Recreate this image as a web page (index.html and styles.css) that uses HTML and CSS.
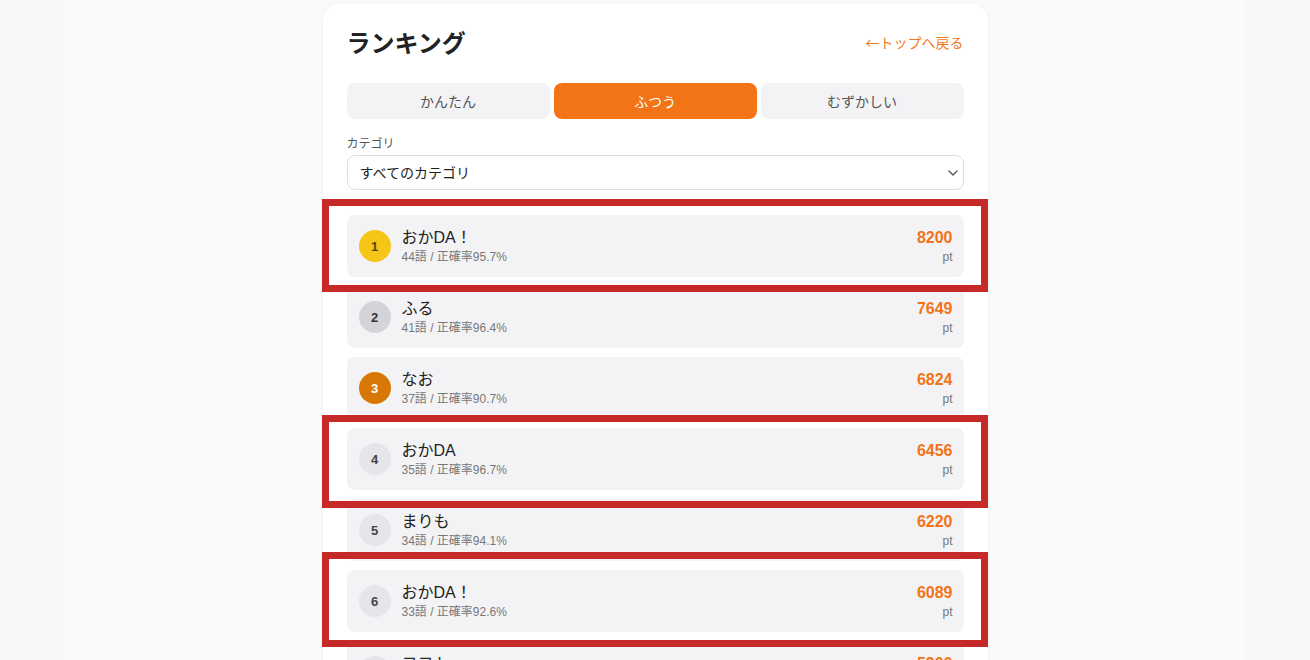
FILE: index.html
```html
<!DOCTYPE html>
<html lang="ja">
<head>
<meta charset="utf-8">
<title>ランキング</title>
<link rel="stylesheet" href="styles.css">
</head>
<body>
<div class="page">
  <main class="card">
    <header class="head">
      <h1 class="title">ランキング</h1>
      <a class="back" href="#">←トップへ戻る</a>
    </header>
    <nav class="tabs">
      <button class="tab">かんたん</button>
      <button class="tab active">ふつう</button>
      <button class="tab">むずかしい</button>
    </nav>
    <label class="label">カテゴリ</label>
    <div class="select">
      <span>すべてのカテゴリ</span>
      <svg class="chev" width="10" height="6" viewBox="0 0 10 6"><path d="M1 1l4 4 4-4" fill="none" stroke="#555" stroke-width="1.4" stroke-linecap="round" stroke-linejoin="round"/></svg>
    </div>
    <ol class="list">
      <li class="row"><span class="rank r1">1</span><div class="info"><div class="name">おかDA！</div><div class="sub">44語 / 正確率95.7%</div></div><div class="score"><div class="pts">8200</div><div class="unit">pt</div></div><span class="mark m1"></span></li>
      <li class="row"><span class="rank r2">2</span><div class="info"><div class="name">ふる</div><div class="sub">41語 / 正確率96.4%</div></div><div class="score"><div class="pts">7649</div><div class="unit">pt</div></div></li>
      <li class="row"><span class="rank r3">3</span><div class="info"><div class="name">なお</div><div class="sub">37語 / 正確率90.7%</div></div><div class="score"><div class="pts">6824</div><div class="unit">pt</div></div></li>
      <li class="row"><span class="rank">4</span><div class="info"><div class="name">おかDA</div><div class="sub">35語 / 正確率96.7%</div></div><div class="score"><div class="pts">6456</div><div class="unit">pt</div></div><span class="mark m2"></span></li>
      <li class="row"><span class="rank">5</span><div class="info"><div class="name">まりも</div><div class="sub">34語 / 正確率94.1%</div></div><div class="score"><div class="pts">6220</div><div class="unit">pt</div></div></li>
      <li class="row"><span class="rank">6</span><div class="info"><div class="name">おかDA！</div><div class="sub">33語 / 正確率92.6%</div></div><div class="score"><div class="pts">6089</div><div class="unit">pt</div></div><span class="mark m3"></span></li>
      <li class="row"><span class="rank">7</span><div class="info"><div class="name">ヨヨト</div><div class="sub">32語 / 正確率91.2%</div></div><div class="score"><div class="pts">5900</div><div class="unit">pt</div></div></li>
    </ol>
  </main>
</div>
</body>
</html>
```
FILE: styles.css
```css
* { box-sizing: border-box; }
html, body { margin: 0; padding: 0; }
body {
  background: #f8f8f8;
  font-family: "Liberation Sans", "Noto Sans CJK JP", sans-serif;
  color: #222;
  overflow: hidden;
}
.page {
  width: 1180px;
  margin: 0 auto;
  background: #fafafa;
  min-height: 660px;
  padding-top: 4px;
}
.card {
  width: 665px;
  margin: 0 auto;
  background: #fff;
  border-radius: 16px;
  box-shadow: 0 1px 4px rgba(0,0,0,0.06);
  padding: 24px;
}
.head {
  display: flex;
  justify-content: space-between;
  align-items: center;
  height: 28px;
  margin-bottom: 27px;
}
.title {
  margin: 0;
  font-family: "Noto Sans CJK JP", sans-serif;
  font-size: 24px;
  line-height: 28px;
  font-weight: 700;
  color: #222;
}
.back {
  font-family: "Noto Sans CJK JP", sans-serif;
  font-size: 14px;
  color: #f27a1f;
  text-decoration: none;
}
.tabs {
  display: grid;
  grid-template-columns: 1fr 1fr 1fr;
  gap: 4px;
}
.tab {
  height: 36px;
  border: 0;
  border-radius: 8px;
  background: #f3f3f5;
  color: #555;
  font-family: "Noto Sans CJK JP", sans-serif;
  font-size: 14px;
  padding: 0;
}
.tab.active {
  background: #f27417;
  color: #fff;
}
.label {
  display: block;
  margin-top: 16px;
  font-family: "Noto Sans CJK JP", sans-serif;
  font-size: 12px;
  line-height: 16px;
  color: #555;
}
.select {
  margin-top: 4px;
  height: 35px;
  border: 1px solid #dedede;
  border-radius: 8px;
  display: flex;
  align-items: center;
  justify-content: space-between;
  padding: 0 5px 0 12px;
  font-family: "Noto Sans CJK JP", sans-serif;
  font-size: 14px;
  color: #222;
}
.select span { margin-top: -2px; }
.chev { margin-top: 1px; }
.list {
  list-style: none;
  margin: 25px 0 0 0;
  padding: 0;
  display: flex;
  flex-direction: column;
  gap: 9px;
}
.row {
  position: relative;
  height: 62px;
  background: #f3f3f5;
  border-radius: 8px;
  display: flex;
  align-items: center;
  padding: 0 12px;
}
.rank {
  width: 32px;
  height: 32px;
  border-radius: 50%;
  background: #e5e5ea;
  color: #444;
  font-size: 13px;
  font-weight: 700;
  display: flex;
  align-items: center;
  justify-content: center;
  flex: none;
}
.rank.r1 { background: #f5c518; color: #5a4300; }
.rank.r2 { background: #d4d4d8; color: #333; }
.rank.r3 { background: #d97706; color: #fff; }
.info {
  margin-left: 11px;
  flex: 1;
}
.name {
  font-size: 16px;
  line-height: 22px;
  color: #222;
}
.sub {
  font-size: 12px;
  line-height: 16px;
  color: #777;
}
.score {
  text-align: right;
  margin-right: -1px;
}
.pts {
  font-size: 16px;
  line-height: 22px;
  font-weight: 700;
  color: #f27417;
}
.unit {
  font-size: 12px;
  line-height: 16px;
  color: #777;
}
.mark {
  position: absolute;
  left: -25px;
  right: -24px;
  border: 7px solid #c62a28;
  z-index: 2;
  pointer-events: none;
}
.m1 { top: -16px; bottom: -15px; }
.m2 { top: -13px; bottom: -18px; }
.m3 { top: -18px; bottom: -15px; }
```
